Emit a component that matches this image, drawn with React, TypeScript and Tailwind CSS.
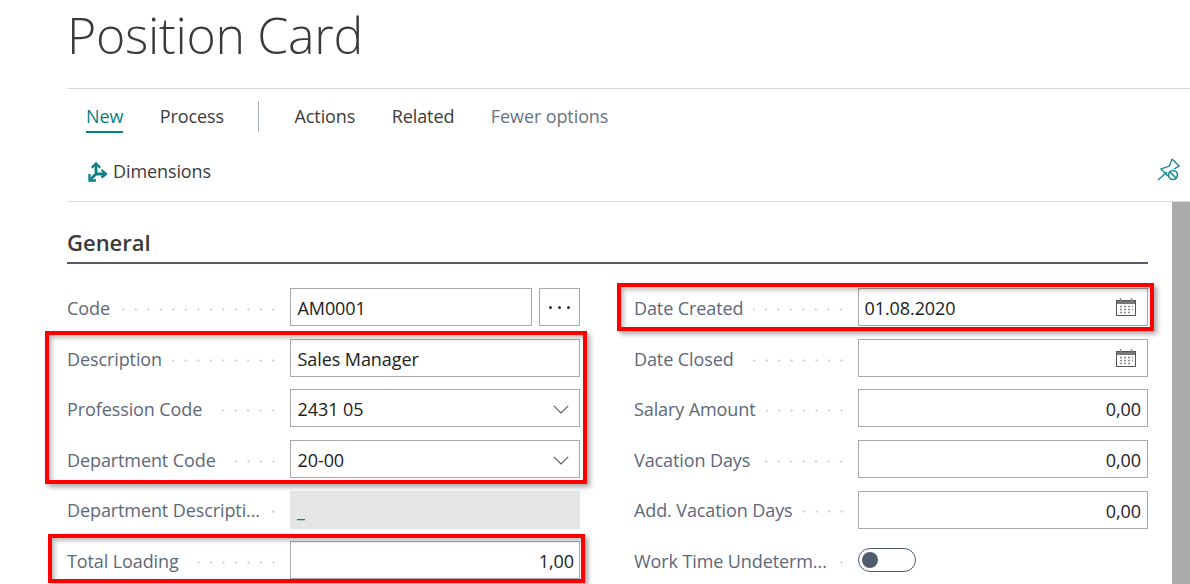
import React from "react";

const font = "font-['Open_Sans','Noto_Sans',sans-serif]";

function Dots() {
  return <span className="ml-[10px] mr-[-2.500px] h-[3px] min-w-0 flex-1 translate-y-[1px] bg-[radial-gradient(circle,#d4d7da_1.1px,transparent_1.4px)] bg-[length:12.500px_3px] bg-right bg-repeat-x" />;
}

function Calendar() {
  return (
    <svg width="22" height="20" viewBox="0 0 22 20" className="absolute right-[10px] top-[8px]" fill="none">
      <rect x="1.500" y="3.500" width="19" height="15" stroke="#555" />
      <rect x="2" y="4" width="18" height="3" fill="#777" />
      <path d="M5.500 1v4M16.500 1v4" stroke="#888" strokeWidth="1.400" />
      <path d="M5 9.500h2M9 9.500h2M13 9.500h2M17 9.500h1M5 12.500h2M9 12.500h2M13 12.500h2M17 12.500h1M5 15.500h2M9 15.500h2M13 15.500h2" stroke="#8a8a8a" strokeWidth="1.500" />
    </svg>
  );
}

function Chevron() {
  return (
    <svg width="16" height="9" viewBox="0 0 16 9" className="absolute right-[10px] top-[15px]" fill="none">
      <path d="M.8.8 8 8 15.200.8" stroke="#505c6d" strokeWidth="1.100" />
    </svg>
  );
}

function Field({ label, wide = false, children }: { label: string; wide?: boolean; children: React.ReactNode }) {
  return (
    <div className="flex h-[38px] items-center">
      <span className={`mr-[13px] flex shrink-0 items-center pt-[2.500px] text-[18px] tracking-[-0.1px] text-[#5d6878] ${wide ? "w-[211px]" : "w-[210px]"}`}>
        <span className="shrink-0">{label}</span>
        <Dots />
      </span>
      {children}
    </div>
  );
}

function Box({ value = "", right = false, icon, pad = "pl-[6.500px] pr-[6px]" }: { value?: string; right?: boolean; icon?: React.ReactNode; pad?: string }) {
  return (
    <div className={`relative h-[38px] min-w-0 flex-1 border border-[#a8a8a8] bg-white ${pad} text-[18px] leading-[38px] tracking-[-0.08px] text-[#212121] ${right ? "text-right" : ""}`}>
      {value}
      {icon}
    </div>
  );
}

function Mark({ className }: { className: string }) {
  return <div className={`pointer-events-none absolute border-[4px] border-[#fe0000] shadow-[3px_3px_5px_rgba(0,0,0,0.35),inset_3px_3px_4px_rgba(0,0,0,0.25)] ${className}`} />;
}

export default function App() {
  return (
    <div className={`relative h-[584px] w-[1190px] overflow-hidden bg-white ${font}`}>
      <div className="pl-[67px]">
        <h1 className="h-[88px] text-[50px] font-light leading-[71px] tracking-[-0.3px] text-[#3a3a3a]">Position Card</h1>
        <div className="border-y border-[#d9d9d9]">
          <nav className="flex h-[55px] items-center pl-[19px] text-[18px] tracking-[-0.1px] text-[#3b3b3b]">
            <span className="relative mr-[36.500px] text-[#0b7f88]">
              New
              <span className="absolute bottom-[-3px] left-0 h-[2px] w-full bg-[#00838c]" />
            </span>
            <span className="mr-[34px]">Process</span>
            <span className="mr-[35.500px] h-[31px] w-px bg-[#a9b2b8]" />
            <span className="mr-[36.500px]">Actions</span>
            <span className="mr-[36.500px]">Related</span>
            <span className="text-[#68737f]">Fewer options</span>
          </nav>
          <div className="flex h-[57px] items-start justify-between pl-[21px] pr-[10px] text-[18px] tracking-[-0.1px] text-[#3b3b3b]">
            <span className="flex items-center gap-[6px] pt-[14px]">
              <svg width="19" height="20" viewBox="0 0 19 20" fill="none" stroke="#0b7f88" strokeWidth="2.800">
                <path d="M8 3v9L3 17M8 12h8" />
                <path d="M3.800 5.800 8 1.500l4.200 4.300M1.500 12v6.500H8M13.500 8l4.500 4-4.500 3.500" strokeWidth="2.300" />
              </svg>
              Dimensions
            </span>
            <svg width="24" height="24" viewBox="0 0 24 24" fill="none" stroke="#12868e" strokeWidth="1.300" className="mt-[13px]">
              <path d="M2 23 11 15M16 2l7 7-5 3M16 2l-2.500 7L5 12l7 7" />
              <circle cx="17" cy="18" r="4.500" strokeWidth="1.600" />
              <path d="m14 15 6 6" strokeWidth="1.500" />
            </svg>
          </div>
        </div>
      </div>

      <div className="flex">
        <main className="w-[1172px] pl-[67px] pr-[24px]">
          <h2 className="mt-[24px] h-[38px] border-b-2 border-[#505c6d] text-[22px] font-semibold leading-[32px] text-[#3a3a3a]">General</h2>
          <div className="mt-[24.400px] grid grid-cols-[513px_514px] gap-x-[54px] gap-y-[12.540px]">
            <Field label="Code">
              <Box value="AM0001" />
              <div className="ml-[7px] flex h-[38px] w-[41px] items-center justify-center gap-[6px] border border-[#a8a8a8]">
                <i className="size-[3px] rounded-full bg-[#2a3340]" />
                <i className="size-[3px] rounded-full bg-[#2a3340]" />
                <i className="size-[3px] rounded-full bg-[#2a3340]" />
              </div>
            </Field>
            <Field wide label="Date Created"><Box value="01.08.2020" icon={<Calendar />} pad="pl-[5.500px] pr-[6px]" /></Field>
            <Field label="Description"><Box value="Sales Manager" /></Field>
            <Field wide label="Date Closed"><Box icon={<Calendar />} /></Field>
            <Field label="Profession Code"><Box value="2431 05" icon={<Chevron />} /></Field>
            <Field wide label="Salary Amount"><Box value="0,00" right /></Field>
            <Field label="Department Code"><Box value="20-00" icon={<Chevron />} /></Field>
            <Field wide label="Vacation Days"><Box value="0,00" right /></Field>
            <Field label="Department Descripti...">
              <div className="h-[38px] flex-1 bg-[#e4e5e7] px-[7px] text-[18px] leading-[38px] text-[#00838c]">_</div>
            </Field>
            <Field wide label="Add. Vacation Days"><Box value="0,00" right /></Field>
            <Field label="Total Loading"><Box value="1,00" right pad="pl-[6px] pr-[5px]" /></Field>
            <Field wide label="Work Time Undeterm...">
              <div className="flex h-[24px] w-[58px] items-center rounded-full border border-[#505c6d] pl-[3px]">
                <span className="size-[16px] rounded-full bg-[#505c6d]" />
              </div>
            </Field>
          </div>
        </main>
        <div className="h-[382px] w-[18px] bg-[#ababab]" />
      </div>

      <Mark className="left-[45px] top-[331px] h-[153px] w-[542px]" />
      <Mark className="left-[617px] top-[283px] h-[48px] w-[537px]" />
      <Mark className="left-[48px] top-[534px] h-[49px] w-[537px]" />
    </div>
  );
}
